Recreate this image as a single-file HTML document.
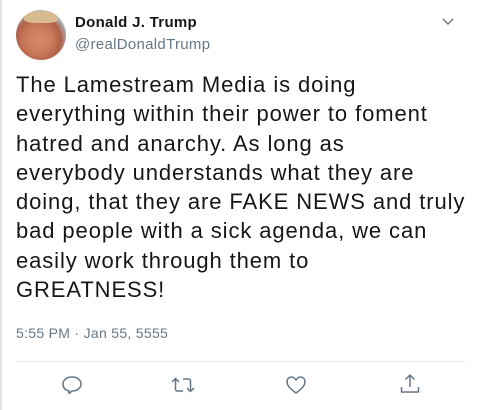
<!DOCTYPE html>
<html><head><style>
body{margin:0;width:480px;height:410px;background:#fff;font-family:"Liberation Sans",Arial,sans-serif;position:relative;overflow:hidden}
.lb{position:absolute;left:0;top:0;width:2px;height:410px;background:#dfe3e8}
.av{position:absolute;left:16px;top:10px;width:50px;height:50px;border-radius:50%;background:radial-gradient(circle at 45% 60%,#d98a6a 0,#c97858 35%,#b06048 55%,#a8cfe8 78%,#cfe6f5 100%);overflow:hidden}
.hair{position:absolute;left:8px;top:1px;width:34px;height:12px;border-radius:50% 50% 30% 30%;background:#d9b98e}
.name{position:absolute;left:75px;top:14px;font-weight:bold;font-size:15px;letter-spacing:0.3px;color:#14171a}
.handle{position:absolute;left:75px;top:36px;font-size:15px;letter-spacing:0.3px;color:#657786}
.txt{position:absolute;left:16px;top:70px;font-size:22px;letter-spacing:0.9px;line-height:29.3px;color:#14171a;white-space:nowrap}
.time{position:absolute;left:16px;top:325px;font-size:14px;letter-spacing:0.3px;color:#657786}
.hr{position:absolute;left:16px;right:14px;top:361px;height:1px;background:#e6ecf0}
svg{position:absolute}
</style></head><body>
<div class="lb"></div>
<div class="av"><div class="hair"></div></div>
<div class="name">Donald J. Trump</div>
<div class="handle">@realDonaldTrump</div>
<svg style="left:441px;top:17px" width="14" height="10" viewBox="0 0 14 10"><path d="M2 2l5 5 5-5" fill="none" stroke="#657786" stroke-width="1.4"/></svg>
<div class="txt">The Lamestream Media is doing<br>everything within their power to foment<br>hatred and anarchy. As long as<br>everybody understands what they are<br>doing, that they are FAKE NEWS and truly<br>bad people with a sick agenda, we can<br>easily work through them to<br>GREATNESS!</div>
<div class="time">5:55 PM · Jan 55, 5555</div>
<div class="hr"></div>
<svg style="left:61px;top:374px" width="22" height="22" viewBox="0 0 22 22"><path d="M8 17c-4-1-6-3.5-6-7 0-4 4-7 9-7s9 3 9 7-4 7-9 7l-3 2.5z" fill="none" stroke="#657786" stroke-width="1.5" stroke-linejoin="round"/></svg>
<svg style="left:171px;top:374px" width="24" height="22" viewBox="0 0 24 22"><path d="M1 8l3.5-3.5L8 8M4.5 5v10a2 2 0 0 0 2 2H12M23 14l-3.5 3.5L16 14M19.5 17V7a2 2 0 0 0-2-2H12" fill="none" stroke="#657786" stroke-width="1.5" stroke-linejoin="round"/></svg>
<svg style="left:285px;top:374px" width="22" height="22" viewBox="0 0 22 22"><path d="M11 19C4 14 2 11 2 7.5 2 5 4 3 6.5 3 8.5 3 10 4.5 11 6c1-1.5 2.5-3 4.5-3C18 3 20 5 20 7.5 20 11 18 14 11 19z" fill="none" stroke="#657786" stroke-width="1.5" stroke-linejoin="round"/></svg>
<svg style="left:399px;top:373px" width="22" height="22" viewBox="0 0 22 22"><path d="M11 2v12M6.5 6.5L11 2l4.5 4.5M2.5 14v5h17v-5" fill="none" stroke="#657786" stroke-width="1.5" stroke-linejoin="round"/></svg>
</body></html>
